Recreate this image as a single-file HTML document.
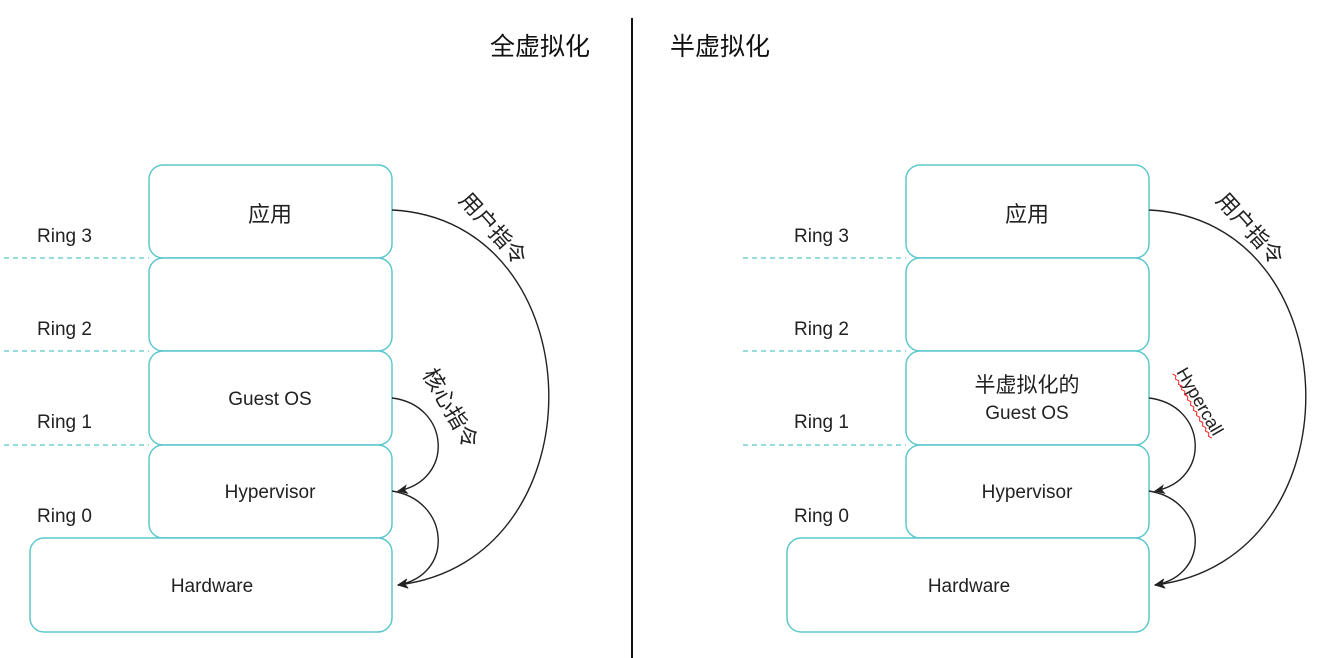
<!DOCTYPE html>
<html><head><meta charset="utf-8"><style>
html,body{margin:0;padding:0;background:#fff;}
svg{display:block;font-family:"Liberation Sans","Noto Sans CJK SC",sans-serif;}
</style></head><body>
<svg width="1324" height="658" viewBox="0 0 1324 658" xmlns="http://www.w3.org/2000/svg">
<defs>
<marker id="ar" markerWidth="12" markerHeight="10" refX="10" refY="5" orient="auto" markerUnits="userSpaceOnUse">
<path d="M0,0 L11,5 L0,10 L3,5 Z" fill="#222"/>
</marker>
<g id="diag">
 <g fill="#fff" stroke="#5cc8cc" stroke-width="1.5">
  <rect x="149" y="165" width="243" height="93" rx="14"/>
  <rect x="149" y="258" width="243" height="93" rx="14"/>
  <rect x="149" y="351" width="243" height="94" rx="14"/>
  <rect x="149" y="445" width="243" height="93" rx="14"/>
  <rect x="30" y="538" width="362" height="94" rx="14"/>
 </g>
 <g stroke="#5cc8cc" stroke-width="1.3" stroke-dasharray="5,4">
  <line x1="-14" y1="258" x2="149" y2="258"/>
  <line x1="-14" y1="351" x2="149" y2="351"/>
  <line x1="-14" y1="445" x2="149" y2="445"/>
 </g>
 <g font-size="19" fill="#222">
  <text x="37" y="242">Ring 3</text>
  <text x="37" y="335">Ring 2</text>
  <text x="37" y="428">Ring 1</text>
  <text x="37" y="522">Ring 0</text>
 </g>
 <g font-size="19" fill="#222" text-anchor="middle">
  <text x="270" y="222" font-size="22">应用</text>
  <text x="270" y="498">Hypervisor</text>
  <text x="212" y="592">Hardware</text>
 </g>
 <g fill="none" stroke="#222" stroke-width="1.4">
  <path d="M392,210 C596,220 604,560 398,585" marker-end="url(#ar)"/>
  <path d="M392,491 C450,500 455,575 398,585" marker-end="url(#ar)"/>
 </g>
</g>
</defs>
<line x1="632" y1="18" x2="632" y2="658" stroke="#111" stroke-width="2"/>
<g font-size="25" fill="#111">
 <text x="590" y="55" text-anchor="end">全虚拟化</text>
 <text x="670" y="55">半虚拟化</text>
</g>
<use href="#diag"/>
<g transform="translate(757,0)"><use href="#diag"/></g>
<!-- left specifics -->
<text x="270" y="405" font-size="19" fill="#222" text-anchor="middle">Guest OS</text>
<path d="M392,398 C450,405 455,480 398,491" fill="none" stroke="#222" stroke-width="1.4" marker-end="url(#ar)"/>
<text font-size="22" fill="#222" transform="translate(458,201) rotate(48)">用户指令</text>
<text font-size="22" fill="#222" transform="translate(422,374) rotate(60)">核心指令</text>
<!-- right specifics -->
<text x="1027" y="392" font-size="21" fill="#222" text-anchor="middle">半虚拟化的</text>
<text x="1027" y="419" font-size="19" fill="#222" text-anchor="middle">Guest OS</text>
<path d="M1149,398 C1207,405 1212,480 1155,491" fill="none" stroke="#222" stroke-width="1.4" marker-end="url(#ar)"/>
<text font-size="22" fill="#222" transform="translate(1215,201) rotate(48)">用户指令</text>
<g transform="translate(1176,372) rotate(60)">
 <text font-size="18" fill="#222">Hypercall</text>
 <path d="M0,4 l3,-2 l3,2 l3,-2 l3,2 l3,-2 l3,2 l3,-2 l3,2 l3,-2 l3,2 l3,-2 l3,2 l3,-2 l3,2 l3,-2 l3,2 l3,-2 l3,2 l3,-2 l3,2 l3,-2 l3,2 l3,-2 l3,2 l3,-2" fill="none" stroke="#f33" stroke-width="1.1"/>
</g>
</svg>
</body></html>
